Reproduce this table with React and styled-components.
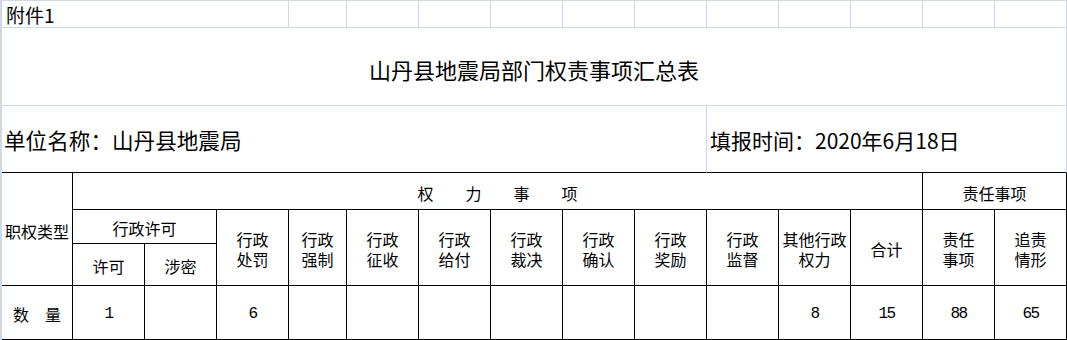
import styled, { createGlobalStyle } from 'styled-components'

const grid = '#d0d7e5'
const ink = '#000'

const GlobalStyle = createGlobalStyle`
  html, body {
    margin: 0;
    padding: 0;
    background: #fff;
  }
  body {
    font-family: "Noto Sans CJK SC", "Noto Sans", sans-serif;
    color: #000;
  }
  * {
    box-sizing: border-box;
  }
`

const Sheet = styled.div`
  display: grid;
  grid-template-columns: 71px 72px 72px 72px 58px repeat(10, 72px);
  grid-template-rows: 27px 78px 67px 37px 34px 42px 54px;
  width: 1067px;
  border-top: 1px solid ${grid};
  border-left: 2px solid ${grid};
`

const Cell = styled.div`
  grid-column: ${(p) => p.$col || 'auto'};
  grid-row: ${(p) => p.$row || 'auto'};
  border-right: 1px solid ${(p) => (p.$right === 'ink' ? ink : grid)};
  border-bottom: 1px solid ${(p) => (p.$bottom === 'ink' ? ink : grid)};
  display: flex;
  min-width: 0;
  overflow: hidden;
`

const NoteCell = styled(Cell)`
  align-items: flex-end;
  padding: 0 0 0 4px;
  font-size: 19px;
  line-height: 25px;
`

const TitleCell = styled(Cell)`
  align-items: center;
  justify-content: center;
  padding-top: 4px;
  font-size: 22px;
  line-height: 30px;
`

const InfoCell = styled(Cell)`
  align-items: center;
  padding-left: ${(p) => p.$indent || 2}px;
  padding-top: 1px;
  font-size: ${(p) => p.$size || 21}px;
  line-height: 28px;
  white-space: nowrap;
`

const HeadCell = styled(Cell)`
  align-items: center;
  justify-content: center;
  text-align: center;
  font-size: 16px;
  line-height: 20px;
  padding-top: ${(p) => p.$nudge || 0}px;
  white-space: pre-line;
`

const Spread = styled.span`
  display: flex;
  gap: ${(p) => p.$gap}px;
`

const DataCell = styled(Cell)`
  align-items: center;
  justify-content: center;
  padding-top: 3px;
  font-family: "Liberation Mono", monospace;
  font-size: 16px;
  letter-spacing: -1.5px;
`

const powers = [
  { label: '行政\n处罚', col: 4 },
  { label: '行政\n强制', col: 5 },
  { label: '行政\n征收', col: 6 },
  { label: '行政\n给付', col: 7 },
  { label: '行政\n裁决', col: 8 },
  { label: '行政\n确认', col: 9 },
  { label: '行政\n奖励', col: 10 },
  { label: '行政\n监督', col: 11 },
  { label: '其他行政\n权力', col: 12 },
  { label: '合计', col: 13 },
  { label: '责任\n事项', col: 14 },
  { label: '追责\n情形', col: 15 },
]

const counts = ['1', '', '6', '', '', '', '', '', '', '', '8', '15', '88', '65']

function Spaced({ text, gap }) {
  return (
    <Spread $gap={gap}>
      {[...text].map((ch, i) => (
        <span key={i}>{ch}</span>
      ))}
    </Spread>
  )
}

export default function App() {
  const topCols = Array.from({ length: 11 }, (_, i) => i + 5)

  return (
    <>
      <GlobalStyle />
      <Sheet>
        <NoteCell $col="1 / 5" $row="1">附件1</NoteCell>
        {topCols.map((c) => (
          <Cell key={c} $col={c} $row="1" />
        ))}

        <TitleCell $col="1 / 16" $row="2">山丹县地震局部门权责事项汇总表</TitleCell>

        <InfoCell $col="1 / 11" $row="3" $bottom="ink" $indent={2} $size={21.6}>
          单位名称：山丹县地震局
        </InfoCell>
        <InfoCell $col="11 / 16" $row="3" $bottom="ink" $indent={3}>
          填报时间：2020年6月18日
        </InfoCell>

        <HeadCell $col="1" $row="4 / 7" $right="ink" $bottom="ink" $nudge={4}>
          职权类型
        </HeadCell>
        <HeadCell $col="2 / 14" $row="4" $right="ink" $bottom="ink" $nudge={3}>
          <Spaced text="权力事项" gap={32} />
        </HeadCell>
        <HeadCell $col="14 / 16" $row="4" $right="ink" $bottom="ink" $nudge={3}>
          责任事项
        </HeadCell>

        <HeadCell $col="2 / 4" $row="5" $right="ink" $bottom="ink" $nudge={3}>
          行政许可
        </HeadCell>
        {powers.map((p) => (
          <HeadCell key={p.col} $col={p.col} $row="5 / 7" $right="ink" $bottom="ink" $nudge={3}>
            {p.label}
          </HeadCell>
        ))}
        <HeadCell $col="2" $row="6" $right="ink" $bottom="ink" $nudge={2}>
          许可
        </HeadCell>
        <HeadCell $col="3" $row="6" $right="ink" $bottom="ink" $nudge={2}>
          涉密
        </HeadCell>

        <HeadCell $col="1" $row="7" $right="ink" $bottom="ink" $nudge={2}>
          <Spaced text="数量" gap={16} />
        </HeadCell>
        {counts.map((v, i) => (
          <DataCell key={i} $col={i + 2} $row="7" $right="ink" $bottom="ink">
            {v}
          </DataCell>
        ))}
      </Sheet>
    </>
  )
}
